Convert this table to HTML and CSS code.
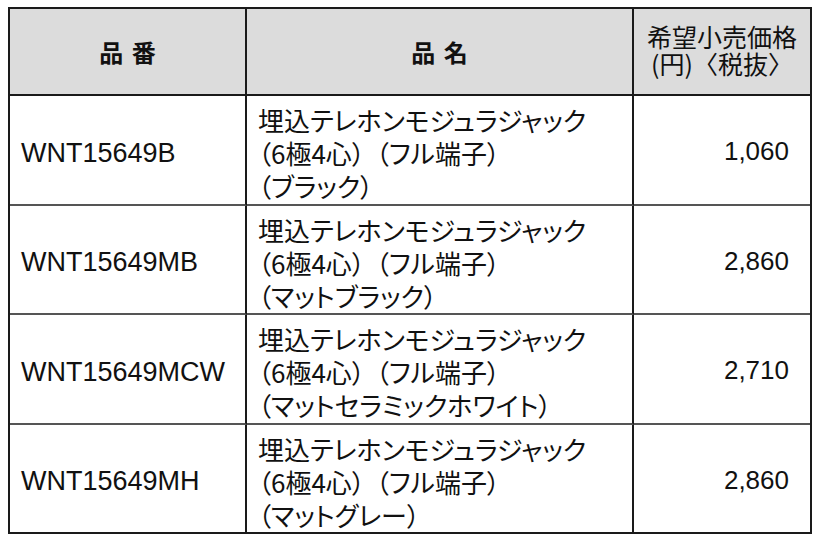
FILE: index.html
```html
<!DOCTYPE html>
<html lang="ja">
<head>
<meta charset="utf-8">
<title>価格表</title>
<link rel="stylesheet" href="styles.css">
</head>
<body>
<div class="table">
  <div class="cell head c1"><span class="htext">品&nbsp;番</span></div>
  <div class="cell head c2"><span class="htext">品&nbsp;名</span></div>
  <div class="cell head c3"><span class="htext2">希望小売価格<br>(円)〈税抜〉</span></div>

  <div class="cell code c1">WNT15649B</div>
  <div class="cell name c2">埋込テレホンモジュラジャック<br>（6極4心）<span class="grp">（フル端子）</span><br>（ブラック）</div>
  <div class="cell price c3">1,060</div>

  <div class="cell code c1">WNT15649MB</div>
  <div class="cell name c2">埋込テレホンモジュラジャック<br>（6極4心）<span class="grp">（フル端子）</span><br>（マットブラック）</div>
  <div class="cell price c3">2,860</div>

  <div class="cell code c1">WNT15649MCW</div>
  <div class="cell name c2">埋込テレホンモジュラジャック<br>（6極4心）<span class="grp">（フル端子）</span><br>（マットセラミックホワイト）</div>
  <div class="cell price c3">2,710</div>

  <div class="cell code c1 last">WNT15649MH</div>
  <div class="cell name c2 last">埋込テレホンモジュラジャック<br>（6極4心）<span class="grp">（フル端子）</span><br>（マットグレー）</div>
  <div class="cell price c3 last">2,860</div>
</div>
</body>
</html>
```
FILE: styles.css
```css
html, body {
  margin: 0;
  padding: 0;
  background: #ffffff;
}

body {
  font-family: "Liberation Sans", "Noto Sans CJK JP", sans-serif;
  color: #111111;
}

.table {
  display: grid;
  grid-template-columns: 237px 387px 176px;
  grid-template-rows: 87px 110px 109px 110px 107px;
  width: 800px;
  border: 2px solid #1a1a1a;
  margin: 7px 0 0 8px;
}

.cell {
  display: flex;
  align-items: center;
  box-sizing: border-box;
  border-bottom: 2px solid #555555;
}

.cell.last {
  border-bottom: none;
}

.c1, .c2 {
  border-right: 2px solid #1a1a1a;
}

.head {
  background: #dcdcdc;
  justify-content: center;
  border-bottom: 2px solid #1a1a1a;
  text-align: center;
}

.htext {
  font-family: "Noto Sans CJK JP", sans-serif;
  font-weight: 700;
  font-size: 24px;
  line-height: 30px;
  word-spacing: 3px;
}

.htext2 {
  font-family: "Noto Sans CJK JP", sans-serif;
  font-size: 25px;
  line-height: 27px;
  margin-top: -4px;
}

.code {
  font-family: "Liberation Sans", sans-serif;
  font-size: 27px;
  padding-left: 11px;
  padding-top: 6px;
}

.name {
  display: block;
  font-family: "Noto Sans CJK JP", sans-serif;
  font-size: 26px;
  line-height: 33px;
  padding: 7px 0 0 11px;
  white-space: nowrap;
  font-feature-settings: "palt";
}

.grp {
  margin-left: 11px;
}

.price {
  font-family: "Liberation Sans", sans-serif;
  font-size: 26px;
  justify-content: flex-end;
  padding-right: 21px;
  padding-top: 3px;
}
```
